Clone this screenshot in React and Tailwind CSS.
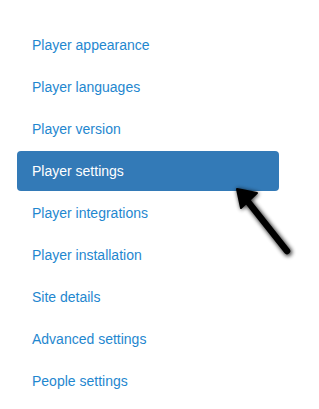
import React from "react";

const items = [
  "Player appearance",
  "Player languages",
  "Player version",
  "Player settings",
  "Player integrations",
  "Player installation",
  "Site details",
  "Advanced settings",
  "People settings",
];

const Arrow = () => (
  <svg
    className="absolute left-[226px] top-[180px]"
    width="80"
    height="86"
    viewBox="0 0 80 86"
  >
    <defs>
      <filter id="blur" x="-20%" y="-20%" width="140%" height="140%">
        <feGaussianBlur stdDeviation="2" />
      </filter>
    </defs>
    <g filter="url(#blur)" opacity="0.8">
      <line x1="20" y1="19" x2="62" y2="72" stroke="#000" strokeWidth="8" strokeLinecap="round" />
      <polygon points="12,10 31,14 16,28" fill="#000" stroke="#000" strokeWidth="3" strokeLinejoin="round" />
    </g>
    <line x1="19" y1="18" x2="61" y2="71" stroke="#000" strokeWidth="6.5" strokeLinecap="round" />
    <polygon points="11,9 31,13 15,28" fill="#000" stroke="#000" strokeWidth="2" strokeLinejoin="round" />
  </svg>
);

export default function App() {
  const active = "Player settings";
  return (
    <div className="relative w-[319px] h-[409px] bg-white font-['Liberation_Sans',Arial,sans-serif]">
      <ul className="flex flex-col gap-[2px] pt-[25px] pl-[17px] w-[279px]">
        {items.map((label) => (
          <li key={label}>
            <a
              className={`block px-[15px] py-[10px] text-[14px] leading-[20px] rounded-[4px] ${
                label === active ? "bg-[#337ab7] text-white" : "text-[#1f87cf]"
              }`}
            >
              {label}
            </a>
          </li>
        ))}
      </ul>
      <Arrow />
    </div>
  );
}
